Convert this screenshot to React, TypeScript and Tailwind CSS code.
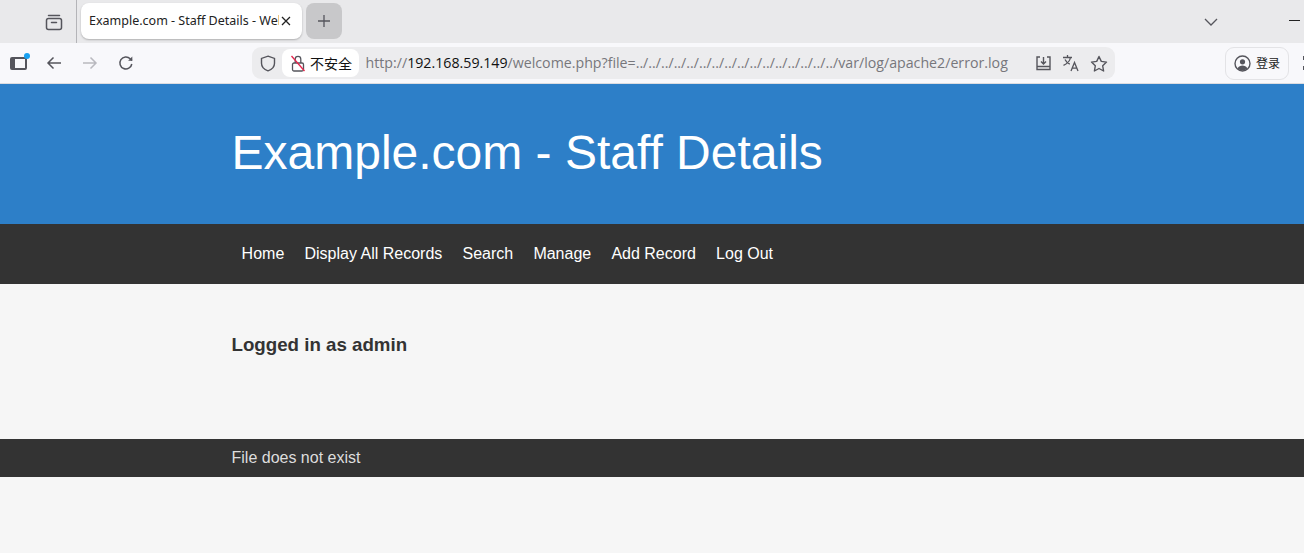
import React from "react";

const ic = "fill-none stroke-[#55555c]";

function Chrome() {
  return (
    <div className="h-[84px] font-['Noto_Sans','Noto_Sans_CJK_SC',sans-serif] overflow-hidden">
      <div className="h-[43px] bg-[#e9e9eb] flex items-stretch">
        <div className="w-[77px] h-[43px] border-r border-[#b4b4b8] flex items-center justify-end pr-[13px]">
          <svg width="18" height="18" viewBox="0 0 18 18" className={ic} strokeWidth="1.5">
            <path d="M3.5 2.5h11" strokeLinecap="round" />
            <rect x="1.5" y="5.5" width="15" height="11" rx="2" />
            <path d="M6.5 9.5h5" strokeLinecap="round" />
          </svg>
        </div>
        <div className="ml-[4px] mt-[3px] w-[221px] h-[36px] bg-white rounded-[8px] shadow-[0_1px_2px_rgba(0,0,0,0.25)] flex items-center pl-[8px] pr-[11px] gap-[2px]">
          <span className="w-[191px] overflow-hidden whitespace-nowrap text-[12.5px] mt-[1px] text-[#222]">Example.com - Staff Details - Welcome</span>
          <svg width="10" height="10" viewBox="0 0 10 10" className="stroke-[#222] fill-none" strokeWidth="1.3">
            <path d="M1 1l8 8M9 1l-8 8" />
          </svg>
        </div>
        <div className="ml-[4px] mt-[3px] w-[36px] h-[36px] bg-[#c8c8ca] rounded-[8px] flex items-center justify-center">
          <svg width="14" height="14" viewBox="0 0 14 14" className="stroke-[#55555c] fill-none" strokeWidth="1.3">
            <path d="M7 1v12M1 7h12" />
          </svg>
        </div>
        <div className="flex-1 flex items-center justify-end">
          <svg width="14" height="8" viewBox="0 0 14 8" className={`${ic} mr-[71px] mt-[1px]`} strokeWidth="1.3">
            <path d="M1 1l6 6 6-6" />
          </svg>
          <div className="w-[11px] h-px bg-[#222] mr-[4px] -mt-[2px]" />
        </div>
      </div>
      <div className="h-[40px] bg-[#f8f8fb] flex items-center relative">
        <div className="relative shrink-0 ml-[10px] w-[17px] h-[13px] mt-[1px] border-[2px] border-[#55555c] border-l-[5px] rounded-[2px]">
          <div className="absolute -top-[6px] -right-[5px] w-[6px] h-[6px] rounded-full bg-[#18a0f0]" />
        </div>
        <svg width="16" height="14" viewBox="0 0 16 14" className={`${ic} shrink-0 ml-[19px]`} strokeWidth="1.5">
          <path d="M15 7H2M7.5 1.5L2 7l5.5 5.5" />
        </svg>
        <svg width="16" height="14" viewBox="0 0 16 14" className="fill-none stroke-[#b9b9bf] shrink-0 ml-[20px]" strokeWidth="1.5">
          <path d="M1 7h13M8.5 1.5L14 7l-5.5 5.5" />
        </svg>
        <svg width="16" height="16" viewBox="0 0 16 16" className={`${ic} shrink-0 ml-[20px]`} strokeWidth="1.5">
          <path d="M13.8 9a6 6 0 1 1-1.6-5.2L14 5.5" />
          <path d="M14.3 1.5v4.2h-4.2" className="fill-[#55555c] stroke-none" />
        </svg>
        <div className="ml-[118px] shrink-0 w-[863px] h-[32px] bg-[#ececee] rounded-[9px] flex items-center">
          <svg width="16" height="17" viewBox="0 0 16 17" className={`${ic} shrink-0 ml-[8px]`} strokeWidth="1.4">
            <path d="M8 1.2l6.5 2.2v4.8c0 3.8-2.8 6.3-6.5 7.6-3.7-1.3-6.5-3.8-6.5-7.6V3.4z" />
          </svg>
          <div className="ml-[6px] shrink-0 w-[77px] h-[28px] bg-white rounded-[8px] flex items-center pl-[9px]">
            <svg width="14" height="17" viewBox="0 0 14 17" className="fill-none shrink-0" strokeWidth="1.3">
              <rect x="1.5" y="8" width="11" height="8" rx="1.5" className="stroke-[#55555c]" />
              <path d="M4.2 8V4.2a2.8 2.8 0 0 1 5.6 0V8" className="stroke-[#55555c]" />
              <path d="M0.5 1l13 15" className="stroke-[#e5264d]" />
            </svg>
            <span className="ml-[5px] text-[14px] text-[#111] font-['Noto_Sans_CJK_SC',sans-serif] whitespace-nowrap">不安全</span>
          </div>
          <div className="ml-[6.5px] shrink-0 w-[645px] whitespace-nowrap overflow-hidden text-[14.2px] text-[#77777c] font-['Open_Sans','Noto_Sans',sans-serif]">
            http://<span className="text-[#111]">192.168.59.149</span>/welcome.php?file=../../../../../../../../../../../../../../../../var/log/apache2/error.log
          </div>
          <svg width="17" height="17" viewBox="0 0 17 17" className={`${ic} shrink-0 ml-[24.5px]`} strokeWidth="1.4">
            <path d="M5 2H2v12.5h13V2h-3M1.5 11.5h14" />
            <path d="M8.5 2v6.5M6 6.5l2.5 2.5L11 6.5" />
          </svg>
          <svg width="18" height="18" viewBox="0 0 18 18" className={`${ic} shrink-0 ml-[10px]`} strokeWidth="1.3">
            <path d="M1 3.5h9M5.5 1v2.5M8.5 3.5c-.6 3.4-3.2 6.2-7 7.8M3 5.5c1 2.1 2.8 3.8 4.8 4.7" />
            <path d="M9 17l3.5-8.5L16 17M10.3 14.2h4.4" />
          </svg>
          <svg width="18" height="17" viewBox="0 0 18 17" className={`${ic} shrink-0 ml-[10px]`} strokeWidth="1.4">
            <path d="M9 1.5l2.3 4.9 5.2.7-3.8 3.7.9 5.2L9 13.5l-4.6 2.5.9-5.2L1.5 7.1l5.2-.7z" strokeLinejoin="round" />
          </svg>
        </div>
        <div className="ml-[110px] shrink-0 w-[64px] h-[33px] border border-[#e3e3e6] rounded-[9px] flex items-center pl-[8px]">
          <svg width="17" height="17" viewBox="0 0 17 17" className={`${ic} shrink-0`} strokeWidth="1.4">
            <circle cx="8.5" cy="8.5" r="7.5" />
            <circle cx="8.5" cy="6.8" r="2.6" className="fill-[#55555c] stroke-none" />
            <path d="M3.6 13.6c1-2.2 3-3 4.9-3s3.9.8 4.9 3a7 7 0 0 1-9.8 0z" className="fill-[#55555c] stroke-none" />
          </svg>
          <span className="ml-[5px] text-[12px] text-[#222] whitespace-nowrap font-['Noto_Sans_CJK_SC',sans-serif]">登录</span>
        </div>
        <div className="ml-[14px] shrink-0 w-[3px] h-[14px] flex flex-col justify-between">
          <div className="h-[4px] bg-[#55555c]" />
          <div className="h-[4px] bg-[#55555c]" />
        </div>
      </div>
      <div className="h-px bg-[#dcdce0]" />
    </div>
  );
}

export default function App() {
  return (
    <div className="w-[1304px] h-[553px] overflow-hidden bg-[#f6f6f6] font-['Liberation_Sans',Arial,sans-serif]">
      <Chrome />
      <header className="h-[140px] bg-[#2d7fc8] px-[231.5px] pt-[38px]">
        <h1 className="text-[48px] leading-[62px] text-white whitespace-nowrap">Example.com - Staff Details</h1>
      </header>
      <nav className="h-[60px] bg-[#333333] px-[231.5px] flex items-center">
        {["Home", "Display All Records", "Search", "Manage", "Add Record", "Log Out"].map((t) => (
          <a key={t} className="px-[10.1px] text-[16px] text-white whitespace-nowrap">{t}</a>
        ))}
      </nav>
      <main className="h-[155px] px-[231.5px] pt-[49px]">
        <h3 className="text-[18.72px] leading-[24px] font-bold text-[#333333]">Logged in as admin</h3>
      </main>
      <footer className="h-[38px] bg-[#333333] px-[231.5px] flex items-center">
        <span className="text-[16px] text-[#dddddd]">File does not exist</span>
      </footer>
    </div>
  );
}
